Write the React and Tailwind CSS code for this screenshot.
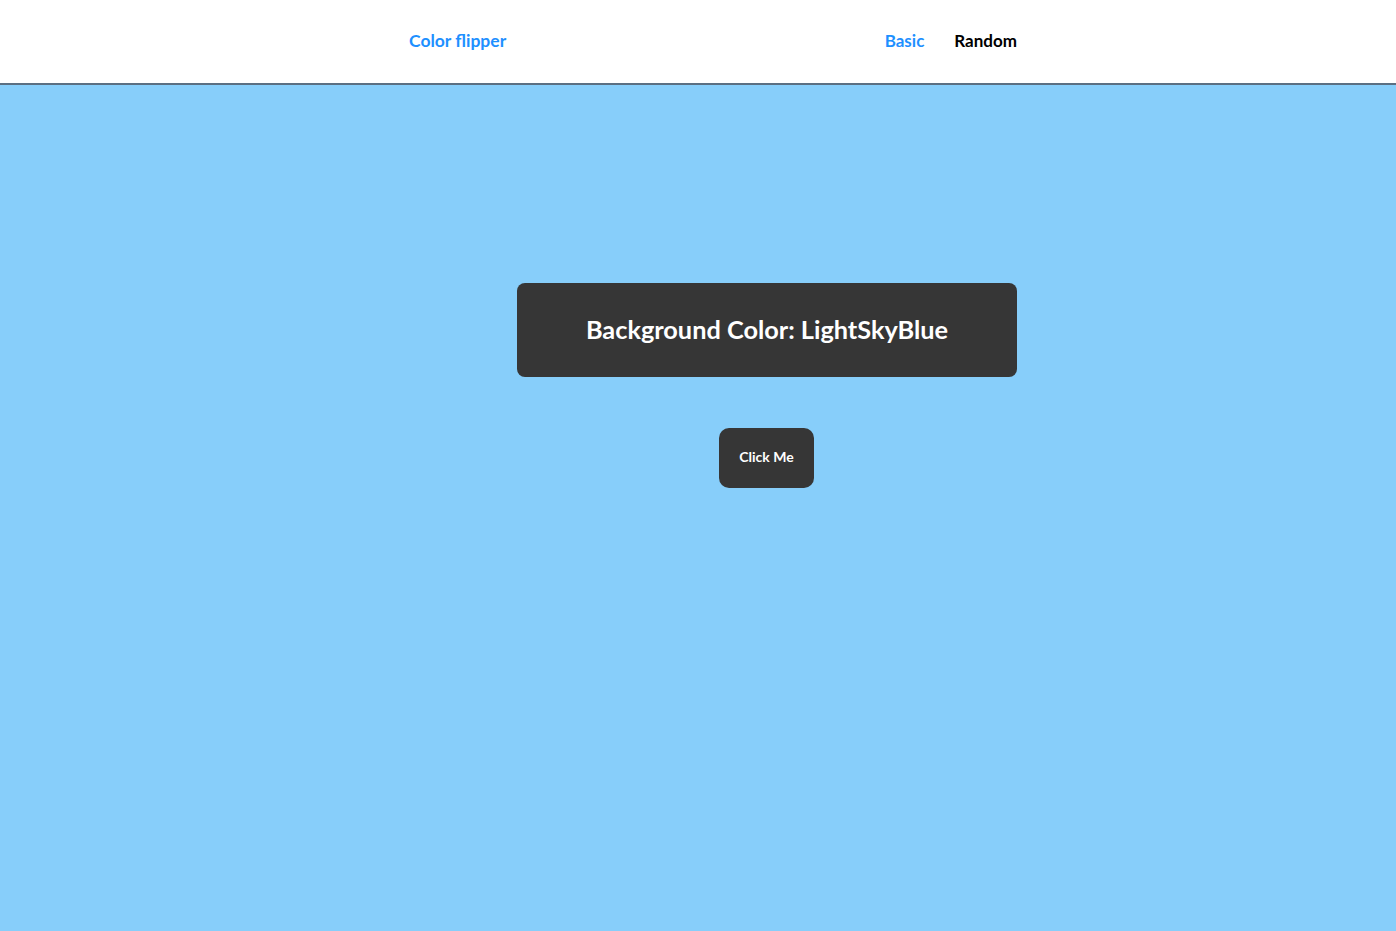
import React, { useState } from 'react';

const App = () => {
  const [color] = useState('LightSkyBlue');

  return (
    <div className="min-h-[931px] bg-[#87cefa] font-['Lato','Open_Sans',sans-serif]">
      {/* Navbar */}
      <nav className="h-[85px] bg-white border-b-2 border-[#5b6f82] flex items-center">
        <div className="ml-[409px] w-[608px] flex items-center justify-between pb-[1px]">
          <a href="#" className="text-[17.5px] font-bold text-[#1e90ff]">Color flipper</a>
          <div className="flex items-center gap-[30px] text-[17px] font-bold">
            <a href="#" className="text-[#1e90ff]">Basic</a>
            <a href="#" className="text-black">Random</a>
          </div>
        </div>
      </nav>

      {/* Main */}
      <main className="ml-[517px] w-[500px] pt-[198px] flex flex-col items-center">
        <div className="w-full h-[94px] rounded-lg bg-[#363636] flex items-center justify-center">
          <h2 className="text-[25.3px] font-bold text-white">Background Color: {color}</h2>
        </div>
        <button className="mt-[51px] mr-[1px] w-[95px] h-[60px] pb-[3px] rounded-[10px] bg-[#363636] text-white text-[14px] font-bold">
          Click Me
        </button>
      </main>
    </div>
  );
};

export default App;
